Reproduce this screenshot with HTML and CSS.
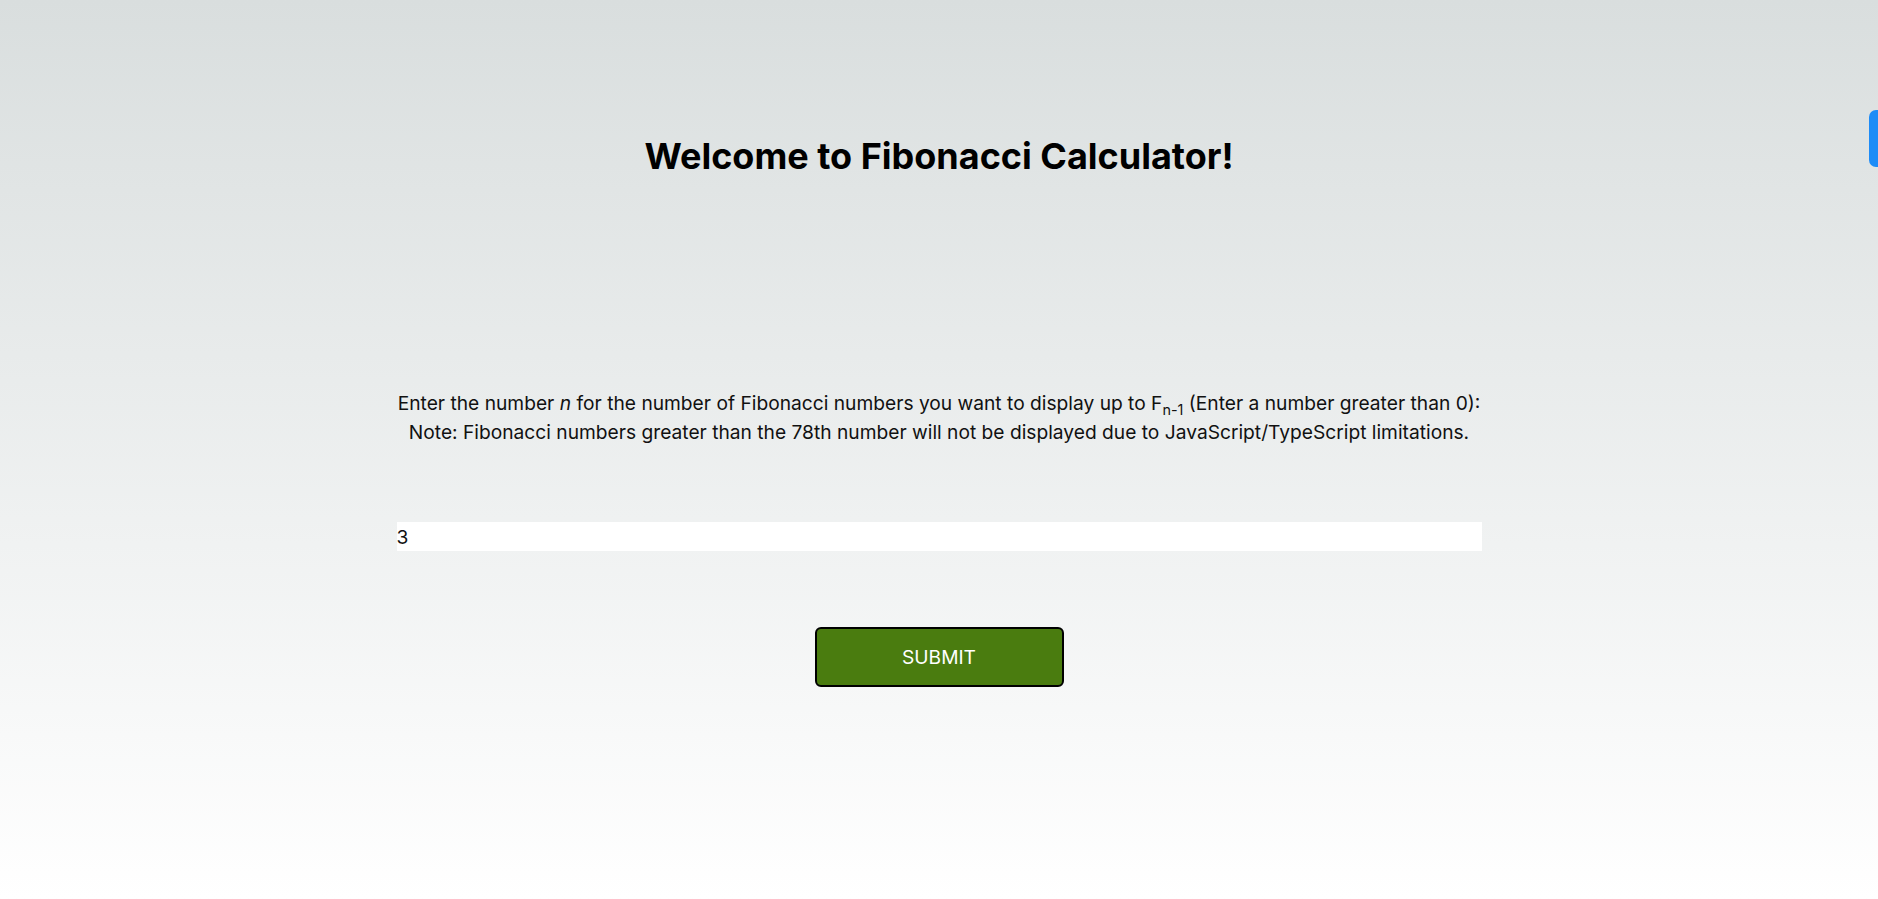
FILE: index.html
```html
<!DOCTYPE html>
<html lang="en">
<head>
<meta charset="utf-8">
<title>Fibonacci Calculator</title>
<link rel="stylesheet" href="styles.css">
</head>
<body>
<main class="page">
  <h1 class="title">Welcome to Fibonacci Calculator!</h1>
  <div class="form">
    <p class="instructions">Enter the number <i>n</i> for the number of Fibonacci numbers you want to display up to F<sub>n-1</sub> (Enter a number greater than 0):<br>Note: Fibonacci numbers greater than the 78th number will not be displayed due to JavaScript/TypeScript limitations.</p>
    <input class="number-input" type="number" value="3">
    <button class="submit" type="button">SUBMIT</button>
  </div>
</main>
<div class="side-tab"></div>
</body>
</html>
```
FILE: styles.css
```css
html, body {
  margin: 0;
  height: 100%;
}
body {
  background: linear-gradient(180deg, #d9dede 0%, #ffffff 100%);
  font-family: Inter, "Noto Sans", sans-serif;
  color: #111;
  overflow: hidden;
  position: relative;
}
.page {
  display: flex;
  flex-direction: column;
  align-items: center;
}
.title {
  margin: 133px 0 0;
  font-size: 36px;
  font-weight: 700;
  line-height: 46px;
  color: #000;
}
.form {
  width: 1085px;
  display: flex;
  flex-direction: column;
  align-items: center;
  margin-top: 210px;
}
.instructions {
  margin: 0;
  font-size: 19.2px;
  line-height: 29px;
  text-align: center;
  color: #111;
}
.instructions sub {
  font-size: 0.75em;
  line-height: 0;
}
.number-input {
  margin-top: 75px;
  align-self: stretch;
  height: 29px;
  box-sizing: border-box;
  border: none;
  padding: 0;
  background: #fff;
  font-family: Inter, "Noto Sans", sans-serif;
  font-size: 19.2px;
  color: #111;
  outline: none;
  -moz-appearance: textfield;
}
.number-input::-webkit-inner-spin-button,
.number-input::-webkit-outer-spin-button {
  -webkit-appearance: none;
  margin: 0;
}
.submit {
  margin-top: 76px;
  width: 249px;
  height: 60px;
  background: #4a7c0f;
  border: 2px solid #000;
  border-radius: 6px;
  color: #fff;
  font-family: Inter, "Noto Sans", sans-serif;
  font-size: 19.2px;
}
.side-tab {
  position: absolute;
  top: 110px;
  right: -10px;
  width: 19px;
  height: 57px;
  background: #1e8cf7;
  border-radius: 7px;
}
```
